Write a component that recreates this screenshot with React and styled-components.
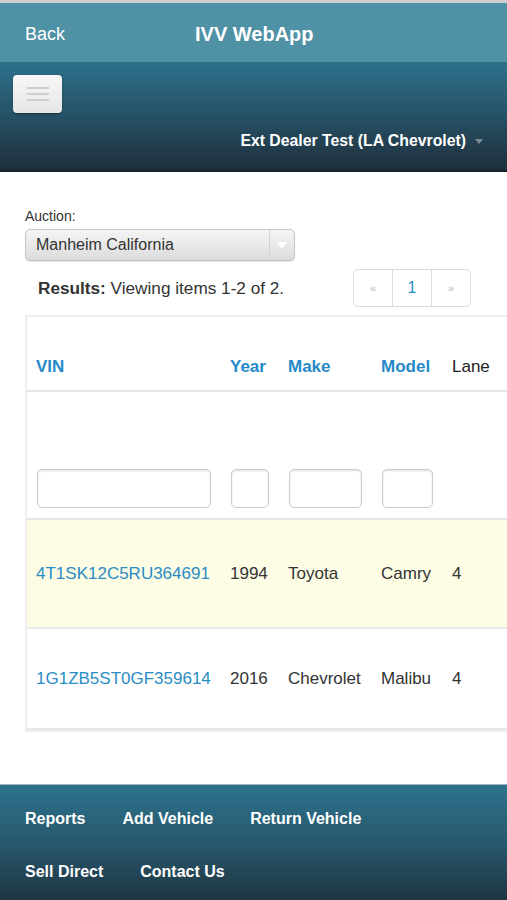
import styled, { createGlobalStyle } from 'styled-components';

const GlobalStyle = createGlobalStyle`
  html, body {
    margin: 0;
    padding: 0;
    background: #ffffff;
    overflow: hidden;
    font-family: "Liberation Sans", Arial, sans-serif;
  }
`

const rows = [
  { vin: '4T1SK12C5RU364691', year: '1994', make: 'Toyota', model: 'Camry', lane: '4', hi: true },
  { vin: '1G1ZB5ST0GF359614', year: '2016', make: 'Chevrolet', model: 'Malibu', lane: '4', hi: false },
];

function App() {
  return (
    <Page>
      <GlobalStyle />
      <TopBar>
        <BackLink>Back</BackLink>
        <Title>IVV WebApp</Title>
      </TopBar>
      <NavBar>
        <MenuButton>
          <span /><span /><span />
        </MenuButton>
        <DealerPick>
          Ext Dealer Test (LA Chevrolet)
          <Caret />
        </DealerPick>
      </NavBar>

      <Content>
        <Label>Auction:</Label>
        <Select>
          <SelectText>Manheim California</SelectText>
          <SelectArrow><Caret light /></SelectArrow>
        </Select>

        <ResultsRow>
          <Summary><b>Results:</b> Viewing items 1-2 of 2.</Summary>
          <Pager>
            <PageCell>&laquo;</PageCell>
            <PageCell active>1</PageCell>
            <PageCell>&raquo;</PageCell>
          </Pager>
        </ResultsRow>

        <TableBox>
          <Grid>
            <colgroup>
              <col style={{ width: 194 }} />
              <col style={{ width: 58 }} />
              <col style={{ width: 93 }} />
              <col style={{ width: 71 }} />
              <col />
            </colgroup>
            <thead>
              <HeadRow>
                <Th link>VIN</Th>
                <Th link>Year</Th>
                <Th link>Make</Th>
                <Th link>Model</Th>
                <Th>Lane</Th>
              </HeadRow>
              <FilterRow>
                <FilterCell><FilterInput w={174} /></FilterCell>
                <FilterCell><FilterInput w={38} /></FilterCell>
                <FilterCell><FilterInput w={73} /></FilterCell>
                <FilterCell><FilterInput w={51} /></FilterCell>
                <FilterCell />
              </FilterRow>
            </thead>
            <tbody>
              {rows.map((r) => (
                <BodyRow key={r.vin} hi={r.hi}>
                  <Td><VinLink>{r.vin}</VinLink></Td>
                  <Td>{r.year}</Td>
                  <Td>{r.make}</Td>
                  <Td>{r.model}</Td>
                  <Td>{r.lane}</Td>
                </BodyRow>
              ))}
            </tbody>
          </Grid>
        </TableBox>
      </Content>

      <Footer>
        <FootLink>Reports</FootLink>
        <FootLink>Add Vehicle</FootLink>
        <FootLink>Return Vehicle</FootLink>
        <FootLink>Sell Direct</FootLink>
        <FootLink>Contact Us</FootLink>
      </Footer>
    </Page>
  );
}

export default App;

const Page = styled.div`
  width: 507px;
  height: 900px;
  display: flex;
  flex-direction: column;
  overflow: hidden;
  border-top: 3px solid #cfcfcf;
  box-sizing: border-box;
`
const TopBar = styled.div`
  height: 59px;
  padding-top: 3px;
  box-sizing: border-box;
  background: #4f91a5;
  display: flex;
  align-items: center;
  color: #ffffff;
  flex-shrink: 0;
`
const BackLink = styled.span`
  margin-left: 25px;
  font-size: 18px;
  width: 170px;
`
const Title = styled.span`
  font-size: 20px;
  font-weight: bold;
`
const NavBar = styled.div`
  height: 110px;
  background: linear-gradient(#2d718b, #254e62 55%, #1f2f3b);
  border-bottom: 2px solid #18222b;
  padding: 13px 0 0 13px;
  box-sizing: border-box;
  display: flex;
  flex-direction: column;
  flex-shrink: 0;
`
const MenuButton = styled.div`
  width: 49px;
  height: 38px;
  border-radius: 4px;
  background: linear-gradient(#f7f7f7, #e6e6e6);
  box-shadow: 0 1px 2px rgba(0, 0, 0, 0.4);
  display: flex;
  flex-direction: column;
  align-items: center;
  justify-content: center;
  gap: 4px;
  span {
    display: block;
    width: 22px;
    height: 2px;
    background: #cfcfcf;
  }
`
const DealerPick = styled.div`
  align-self: flex-end;
  margin: 19px 24px 0 0;
  display: flex;
  align-items: center;
  gap: 9px;
  color: #ffffff;
  font-size: 15.8px;
  font-weight: bold;
`
const Caret = styled.span`
  width: 0;
  height: 0;
  border-left: 4px solid transparent;
  border-right: 4px solid transparent;
  border-top: 5px solid ${(p) => (p.light ? '#ffffff' : '#7d8a93')};
`
const Content = styled.div`
  flex: 1;
  padding: 36px 0 0 25px;
  color: #333333;
`
const Label = styled.div`
  font-size: 14px;
  line-height: 16px;
  color: #333333;
`
const Select = styled.div`
  margin-top: 5px;
  width: 270px;
  height: 32px;
  box-sizing: border-box;
  border: 1px solid #c4c4c4;
  border-radius: 5px;
  background: linear-gradient(#f5f5f5, #dcdcdc);
  display: flex;
  align-items: center;
  box-shadow: 0 1px 1px rgba(0, 0, 0, 0.1);
`
const SelectText = styled.span`
  flex: 1;
  padding-left: 10px;
  font-size: 16px;
  color: #333333;
`
const SelectArrow = styled.span`
  width: 24px;
  height: 100%;
  border-left: 1px solid #d2d2d2;
  display: flex;
  align-items: center;
  justify-content: center;
  ${Caret} {
    border-top-color: #ffffff;
    border-left-width: 5px;
    border-right-width: 5px;
    border-top-width: 7px;
  }
`
const ResultsRow = styled.div`
  display: flex;
  align-items: center;
  margin-top: 8px;
  height: 38px;
`
const Summary = styled.div`
  margin-left: 13px;
  width: 315px;
  font-size: 17.2px;
  color: #333333;
`
const Pager = styled.div`
  display: flex;
  border: 1px solid #dddddd;
  border-radius: 5px;
  height: 38px;
  box-sizing: border-box;
`
const PageCell = styled.div`
  width: 38px;
  display: flex;
  align-items: center;
  justify-content: center;
  font-size: ${(p) => (p.active ? '16px' : '11px')};
  color: ${(p) => (p.active ? '#2a8cc4' : '#b5b5b5')};
  & + & {
    border-left: 1px solid #dddddd;
  }
`
const TableBox = styled.div`
  margin-top: 8px;
  width: 520px;
  border: 2px solid #eeeeee;
  border-right: none;
`
const Grid = styled.table`
  width: 100%;
  border-collapse: collapse;
  table-layout: fixed;
  font-size: 17px;
`
const HeadRow = styled.tr`
  height: 74px;
  border-bottom: 2px solid #e6e6e6;
`
const Th = styled.th`
  text-align: left;
  vertical-align: bottom;
  padding: 0 0 13px 9px;
  font-size: 17px;
  font-weight: ${(p) => (p.link ? 'bold' : 'normal')};
  color: ${(p) => (p.link ? '#2589c8' : '#222222')};
`
const FilterRow = styled.tr`
  height: 128px;
  border-bottom: 2px solid #e6e6e6;
`
const FilterCell = styled.td`
  vertical-align: bottom;
  padding: 0 0 10px 10px;
`
const FilterInput = styled.div`
  width: ${(p) => p.w}px;
  height: 39px;
  box-sizing: border-box;
  border: 1px solid #cccccc;
  border-radius: 5px;
  box-shadow: inset 0 1px 2px rgba(0, 0, 0, 0.12);
  background: #ffffff;
`
const BodyRow = styled.tr`
  height: ${(p) => (p.hi ? '109px' : '101px')};
  background: ${(p) => (p.hi ? '#fdfde6' : '#ffffff')};
  border-bottom: 2px solid #e8e8e8;
`
const Td = styled.td`
  padding-left: 9px;
  color: #333333;
  white-space: nowrap;
`
const VinLink = styled.span`
  color: #2a8cc4;
`
const Footer = styled.div`
  height: 116px;
  flex-shrink: 0;
  background: linear-gradient(#2d738d, #27566a 55%, #1f3440);
  border-top: 1px solid #9fb7c0;
  box-sizing: border-box;
  padding: 24px 0 0 25px;
  display: flex;
  flex-wrap: wrap;
  align-content: flex-start;
  column-gap: 37px;
  row-gap: 34px;
`
const FootLink = styled.span`
  color: #ffffff;
  font-size: 16px;
  font-weight: bold;
  line-height: 19px;
  &:nth-child(3) {
    margin-right: 100px;
  }
`
